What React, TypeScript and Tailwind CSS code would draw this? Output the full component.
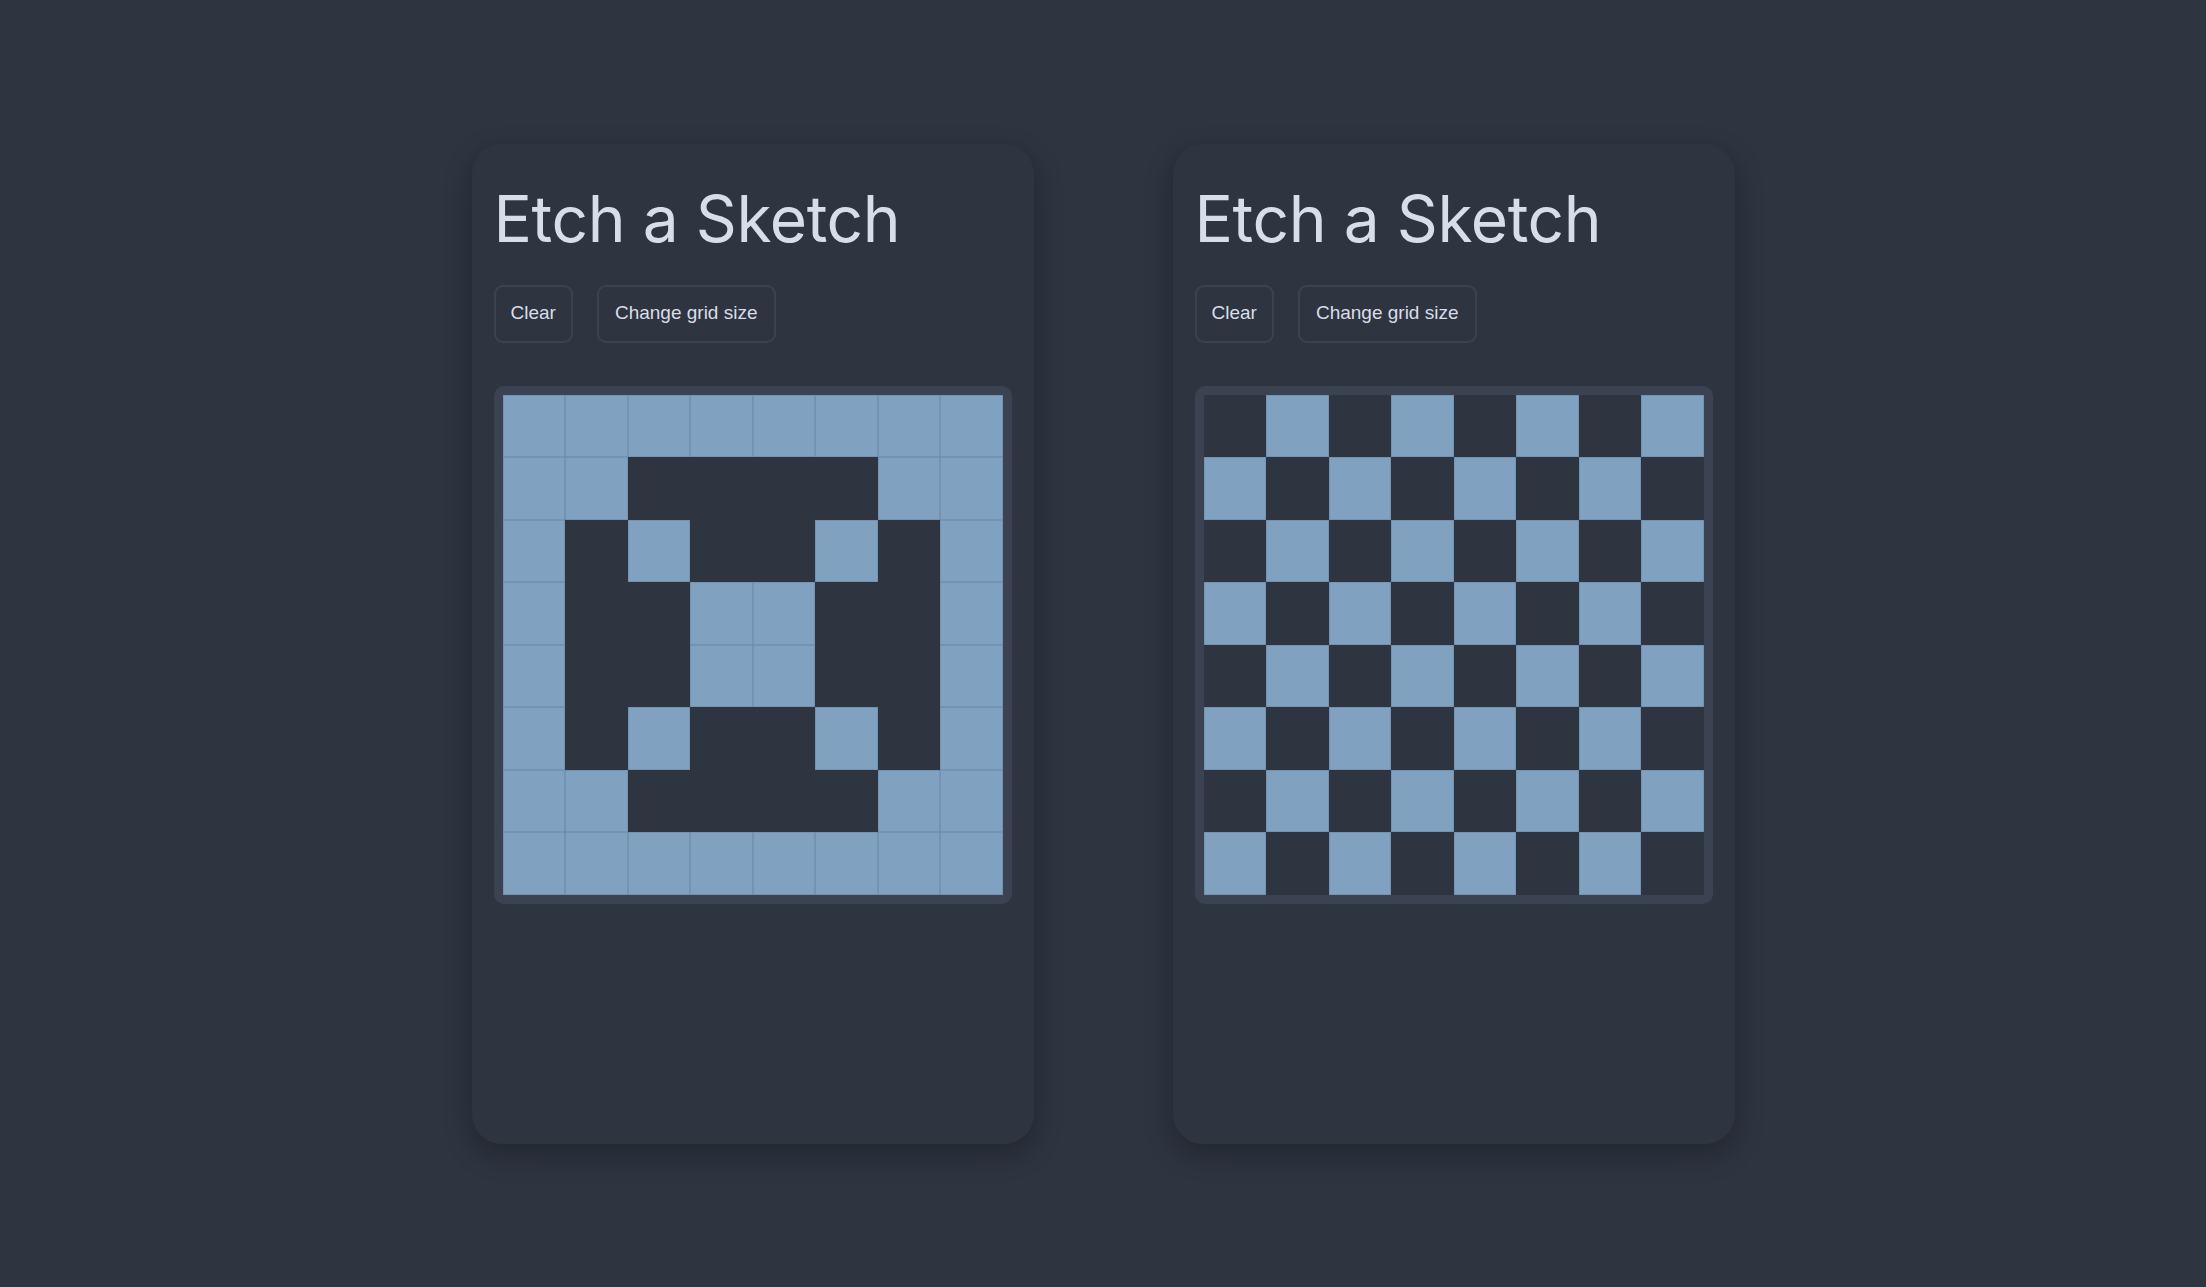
const smiley = [
  '11111111',
  '11000011',
  '10100101',
  '10011001',
  '10011001',
  '10100101',
  '11000011',
  '11111111',
]

const checker = Array.from({ length: 8 }, (_, r) =>
  Array.from({ length: 8 }, (_, c) => ((r + c) % 2 === 1 ? '1' : '0')).join('')
)

const SketchGrid = ({ rows }: { rows: string[] }) => {
  return (
    <div className="w-[518px] h-[518px] p-[9px] bg-[#3b4252] rounded-[10px]">
      <div className="grid grid-cols-8 grid-rows-8 w-full h-full">
        {rows.map((row, r) =>
          row.split('').map((v, c) => (
            <div
              key={`${r}-${c}`}
              className={
                v === '1'
                  ? 'bg-[#81a1c1] shadow-[inset_0_0_0_0.5px_#6886a4]'
                  : 'bg-[#2e3440]'
              }
            />
          ))
        )}
      </div>
    </div>
  )
}

const SketchCard = ({ rows }: { rows: string[] }) => {
  return (
    <div className="w-[562px] h-[1000px] rounded-[30px] bg-[#2e3440] shadow-[0_10px_28px_rgba(0,0,0,0.28)] px-[22px] pt-[43px]">
      <h1 className="text-[64px] leading-none tracking-[-0.4px] text-[#d8dee9] font-normal font-['Inter',sans-serif]">
        Etch a Sketch
      </h1>
      <div className="flex gap-[24px] mt-[34px] mb-[43px] font-['Liberation_Sans',Arial,sans-serif] text-[19px] text-[#d8dee9]">
        <button className="h-[58px] px-[15px] border-2 border-[#3b4252] rounded-[9px] bg-[#2e3440]">Clear</button>
        <button className="h-[58px] px-[16px] border-2 border-[#3b4252] rounded-[9px] bg-[#2e3440]">Change grid size</button>
      </div>
      <SketchGrid rows={rows} />
    </div>
  )
}

export default function App() {
  return (
    <div className="min-h-screen w-full bg-[#2e3440] flex items-center justify-center gap-[139px]">
      <SketchCard rows={smiley} />
      <SketchCard rows={checker} />
    </div>
  )
}
